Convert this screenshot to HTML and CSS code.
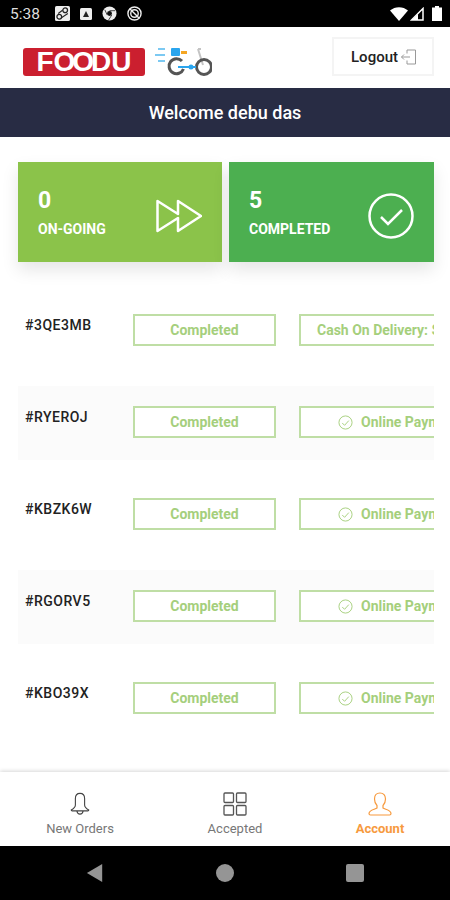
FILE: index.html
```html
<!DOCTYPE html>
<html>
<head>
    <title>Foodu</title>
    <link rel="stylesheet" href="styles.css">
</head>
<body>
    <div class="status-bar">
        <span class="status-time">5:38</span>
        <div class="status-icons">
            <svg class="note-icon" viewBox="0 0 14 14"><rect width="14" height="14" rx="1.5" fill="#eee"/><circle cx="9.5" cy="4" r="2.2" fill="none" stroke="#222" stroke-width="1.2"/><circle cx="4" cy="10" r="2.2" fill="none" stroke="#222" stroke-width="1.2"/><path d="M3 7l4-3M6 11l6-4" stroke="#222"/></svg>
            <svg class="note-icon small" viewBox="0 0 12 12"><rect width="12" height="12" rx="1.5" fill="#eee"/><path d="M6 3l3 6H3z" fill="#222"/></svg>
            <svg class="note-icon" viewBox="0 0 16 16"><circle cx="8" cy="8" r="7.5" fill="#eee"/><circle cx="8" cy="8" r="2.6" fill="#111"/><path d="M8 5h6M5.5 9.5L3 4M10.5 9.5L7 15" stroke="#111" stroke-width=".8"/></svg>
            <svg class="note-icon" viewBox="0 0 16 16"><circle cx="8" cy="8" r="7" fill="none" stroke="#eee" stroke-width="1.5"/><circle cx="8" cy="8" r="4" fill="none" stroke="#eee" stroke-width="1.5"/><path d="M3 3l10 10" stroke="#eee" stroke-width="1.5"/></svg>
        </div>
        <div class="status-right">
            <svg class="wifi-icon" viewBox="0 0 18 14"><path d="M0 3.5C5-1 13-1 18 3.500L9 14z" fill="#fff"/></svg>
            <svg class="signal-icon" viewBox="0 0 14 14"><path d="M13 1.500V13H1.500z" fill="none" stroke="#fff" stroke-width="1.500"/><path d="M8 7v6H2z" fill="#fff"/></svg>
            <svg class="battery-icon" viewBox="0 0 10 15"><path d="M3 0h4v1.500h3V15H0V1.500h3z" fill="#fff"/></svg>
        </div>
    </div>

    <header class="top-bar">
        <div class="brand">
            <div class="brand-logo">F<span class="brand-o">O</span><span class="brand-o">O</span>DU</div>
            <svg class="brand-bike" viewBox="0 0 58 30">
                <path d="M4 2h7M1 8h10M4 14h7" stroke="#7cc9f2" stroke-width="2"/>
                <rect x="17" y="1" width="9" height="8" rx="1" fill="#2aa5ee"/>
                <rect x="27" y="4" width="6" height="3" fill="#f5a623"/>
                <path d="M44 2h3M44 2l5 16" fill="none" stroke="#c4c4c4" stroke-width="2"/>
                <path d="M28 14a7.500 7.500 0 1 0 1.500 8" fill="none" stroke="#555" stroke-width="3"/>
                <circle cx="50" cy="20" r="7.500" fill="none" stroke="#555" stroke-width="3"/>
                <path d="M24 20h18" stroke="#2aa5ee" stroke-width="2"/>
                <circle cx="37" cy="20" r="2.500" fill="#2aa5ee"/>
            </svg>
        </div>
        <button class="logout-btn">
            <span>Logout</span>
            <svg class="logout-icon" viewBox="0 0 16 16"><path d="M6 4.500V1h8.500v14H6v-3.500M0.500 8H9M3 5.500L0.500 8 3 10.500" fill="none" stroke="#999" stroke-width="1"/></svg>
        </button>
    </header>

    <div class="welcome-bar">Welcome debu das</div>

    <div class="stat-cards">
        <div class="stat-card ongoing">
            <div>
                <div class="stat-value">0</div>
                <div class="stat-label">ON-GOING</div>
            </div>
            <svg class="stat-icon arrows" viewBox="0 0 46 34"><path d="M1.500 2v30L22 19v13l23-15L22 2v13z" fill="none" stroke="#fff" stroke-width="2.500" stroke-linejoin="round"/></svg>
        </div>
        <div class="stat-card completed">
            <div>
                <div class="stat-value">5</div>
                <div class="stat-label">COMPLETED</div>
            </div>
            <svg class="stat-icon check" viewBox="0 0 46 46"><circle cx="23" cy="23" r="21.500" fill="none" stroke="#fff" stroke-width="2.500"/><path d="M13 24l7 7 14-14" fill="none" stroke="#fff" stroke-width="2.500"/></svg>
        </div>
    </div>

    <div class="order-list">
        <div class="order-row">
            <div class="order-id">#3QE3MB</div>
            <div class="order-tag status">Completed</div>
            <div class="order-tag payment cash">Cash On Delivery: $12.50</div>
        </div>
        <div class="order-row shaded">
            <div class="order-id">#RYEROJ</div>
            <div class="order-tag status">Completed</div>
            <div class="order-tag payment"><svg class="tag-icon" viewBox="0 0 16 16"><circle cx="8" cy="8" r="7" fill="none" stroke="#a5cf7c"/><path d="M4.500 8.500l2.500 2.500 4.500-5" fill="none" stroke="#a5cf7c"/></svg>Online Payment</div>
        </div>
        <div class="order-row">
            <div class="order-id">#KBZK6W</div>
            <div class="order-tag status">Completed</div>
            <div class="order-tag payment"><svg class="tag-icon" viewBox="0 0 16 16"><circle cx="8" cy="8" r="7" fill="none" stroke="#a5cf7c"/><path d="M4.500 8.500l2.500 2.500 4.500-5" fill="none" stroke="#a5cf7c"/></svg>Online Payment</div>
        </div>
        <div class="order-row shaded">
            <div class="order-id">#RGORV5</div>
            <div class="order-tag status">Completed</div>
            <div class="order-tag payment"><svg class="tag-icon" viewBox="0 0 16 16"><circle cx="8" cy="8" r="7" fill="none" stroke="#a5cf7c"/><path d="M4.500 8.500l2.500 2.500 4.500-5" fill="none" stroke="#a5cf7c"/></svg>Online Payment</div>
        </div>
        <div class="order-row">
            <div class="order-id">#KBO39X</div>
            <div class="order-tag status">Completed</div>
            <div class="order-tag payment"><svg class="tag-icon" viewBox="0 0 16 16"><circle cx="8" cy="8" r="7" fill="none" stroke="#a5cf7c"/><path d="M4.500 8.500l2.500 2.500 4.500-5" fill="none" stroke="#a5cf7c"/></svg>Online Payment</div>
        </div>
    </div>

    <nav class="bottom-nav">
        <div class="nav-item">
            <svg class="nav-icon" viewBox="0 0 24 26"><path d="M12 1.500c-3 0-5 2-5 5.500v7c0 2.500-2 4-4.500 5.500 0 .8.500 1 1 1h17c.5 0 1-.2 1-1-2.500-1.500-4.500-3-4.500-5.500V7c0-3.500-2-5.500-5-5.500zM8.500 20.500c.5 2.500 2 3.500 3.500 3.500s3-1 3.500-3.500" fill="none" stroke="#444" stroke-width="1.200"/></svg>
            <span>New Orders</span>
        </div>
        <div class="nav-item">
            <svg class="nav-icon" viewBox="0 0 24 24"><g fill="none" stroke="#555" stroke-width="1.300"><rect x="1" y="1" width="9.500" height="9.500" rx="1"/><rect x="13.500" y="1" width="9.500" height="9.500" rx="1"/><rect x="1" y="13.500" width="9.500" height="9.500" rx="1"/><rect x="13.500" y="13.500" width="9.500" height="9.500" rx="1"/></g></svg>
            <span>Accepted</span>
        </div>
        <div class="nav-item active">
            <svg class="nav-icon" viewBox="0 0 24 24"><path d="M12 1c-3.500 0-5.500 2.500-5.500 6 0 2.500 1 5 2.500 6.500v2.500c-2 1.500-8 2-8 5.500 0 1 .5 1.500 1.500 1.500h19c1 0 1.500-.5 1.500-1.500 0-3.500-6-4-8-5.500v-2.500c1.500-1.500 2.500-4 2.500-6.500 0-3.500-2-6-5.500-6z" fill="none" stroke="#f79a3e" stroke-width="1.200"/></svg>
            <span>Account</span>
        </div>
    </nav>

    <div class="system-nav">
        <svg class="sys-icon" viewBox="0 0 18 20"><path d="M17 0v20L0 10z" fill="#959595"/></svg>
        <svg class="sys-icon" viewBox="0 0 18 18"><circle cx="9" cy="9" r="9" fill="#959595"/></svg>
        <svg class="sys-icon" viewBox="0 0 18 18"><rect width="18" height="18" rx="2" fill="#959595"/></svg>
    </div>
</body>
</html>
```

FILE: styles.css
```css
* {
    box-sizing: border-box;
}
body {
    margin: 0;
    width: 450px;
    height: 900px;
    display: flex;
    flex-direction: column;
    overflow: hidden;
    background: #fff;
    font-family: Roboto, sans-serif;
    color: #222;
}
.status-bar {
    height: 27px;
    flex: none;
    display: flex;
    align-items: center;
    padding: 0 8px 0 10px;
    background: #000;
    color: #ddd;
    font-size: 15.5px;
}
.status-time {
    width: 45px;
}
.status-icons {
    display: flex;
    align-items: center;
    gap: 10px;
}
.note-icon {
    width: 15px;
    height: 15px;
}
.note-icon.small {
    width: 12px;
    height: 12px;
}
.status-right {
    margin-left: auto;
    display: flex;
    align-items: center;
    gap: 2px;
}
.wifi-icon {
    width: 18px;
    height: 14px;
}
.signal-icon {
    width: 14px;
    height: 14px;
    margin-right: 6px;
}
.battery-icon {
    width: 10px;
    height: 15px;
}
.top-bar {
    height: 61px;
    flex: none;
    display: flex;
    align-items: center;
    justify-content: space-between;
    padding: 0 16px 0 23px;
    background: #fff;
}
.brand {
    display: flex;
    align-items: center;
    gap: 9px;
    margin-top: 8px;
}
.brand-logo {
    width: 122px;
    height: 28px;
    display: flex;
    align-items: center;
    justify-content: center;
    background: #cb1f2f;
    border-radius: 3px;
    color: #fff;
    font-family: "Liberation Sans", sans-serif;
    font-size: 28px;
    font-weight: 700;
    line-height: 28px;
}
.brand-o {
    margin-right: -3px;
}
.brand-bike {
    width: 58px;
    height: 30px;
}
.logout-btn {
    width: 102px;
    height: 39px;
    margin-bottom: 2px;
    display: flex;
    align-items: center;
    justify-content: center;
    gap: 3px;
    padding: 0 0 0 2px;
    background: #fff;
    border: 2px solid #f4f4f4;
    color: #222;
    font-family: Roboto, sans-serif;
    font-size: 15px;
    font-weight: 500;
}
.logout-icon {
    width: 16px;
    height: 16px;
}
.welcome-bar {
    height: 49px;
    flex: none;
    display: flex;
    align-items: center;
    justify-content: center;
    background: #282c44;
    color: #fff;
    font-size: 18px;
    font-weight: 500;
}
.stat-cards {
    display: flex;
    gap: 7px;
    margin: 25px 16px 0 18px;
}
.stat-card {
    flex: 1;
    height: 100px;
    display: flex;
    align-items: center;
    justify-content: space-between;
    padding: 0 20px;
    color: #fff;
    box-shadow: 0 8px 16px rgba(0, 0, 0, 0.1);
}
.stat-card.ongoing {
    flex: none;
    width: 204px;
    background: #8bc34a;
}
.stat-card.completed {
    background: #4caf50;
}
.stat-value {
    font-size: 23px;
    font-weight: 700;
    line-height: 26px;
}
.stat-label {
    margin-top: 7px;
    font-size: 14px;
    font-weight: 700;
    line-height: 16px;
}
.stat-icon {
    flex: none;
    margin-top: 8px;
}
.stat-icon.arrows {
    width: 46px;
    height: 34px;
}
.stat-icon.check {
    width: 46px;
    height: 46px;
}
.order-list {
    margin: 32px 16px 0 18px;
    display: flex;
    flex-direction: column;
    gap: 18px;
}
.order-row {
    height: 74px;
    display: flex;
    align-items: center;
    overflow: hidden;
    padding-left: 7px;
}
.order-row.shaded {
    background: #fbfbfb;
}
.order-id {
    width: 108px;
    flex: none;
    margin-bottom: 12px;
    color: #222;
    font-size: 14px;
    font-weight: 500;
    letter-spacing: 0.5px;
}
.order-tag {
    height: 32px;
    flex: none;
    margin-bottom: 2px;
    display: flex;
    align-items: center;
    justify-content: center;
    border: 2px solid #bfdea5;
    background: #fff;
    color: #a5cf7c;
    font-size: 14px;
    font-weight: 700;
    white-space: nowrap;
}
.order-tag.status {
    width: 143px;
}
.order-tag.payment {
    width: 190px;
    margin-left: 23px;
    justify-content: flex-start;
    padding-left: 37px;
}
.order-tag.payment.cash {
    padding-left: 16px;
}
.tag-icon {
    width: 15px;
    height: 15px;
    margin-right: 8px;
}
.bottom-nav {
    height: 74px;
    margin-top: auto;
    flex: none;
    display: grid;
    grid-template-columns: 160px 150px 140px;
    align-items: start;
    padding-top: 20px;
    background: #fff;
    box-shadow: 0 -1px 4px rgba(0, 0, 0, 0.16);
}
.nav-item {
    display: flex;
    flex-direction: column;
    align-items: center;
    gap: 5px;
    color: #777;
    font-size: 13px;
}
.nav-item.active {
    color: #f79a3e;
    font-weight: 700;
}
.nav-icon {
    width: 24px;
    height: 24px;
}
.system-nav {
    height: 54px;
    flex: none;
    display: flex;
    align-items: center;
    justify-content: space-between;
    padding: 0 86px;
    background: #000;
}
.sys-icon {
    width: 18px;
    height: 18px;
}
```
